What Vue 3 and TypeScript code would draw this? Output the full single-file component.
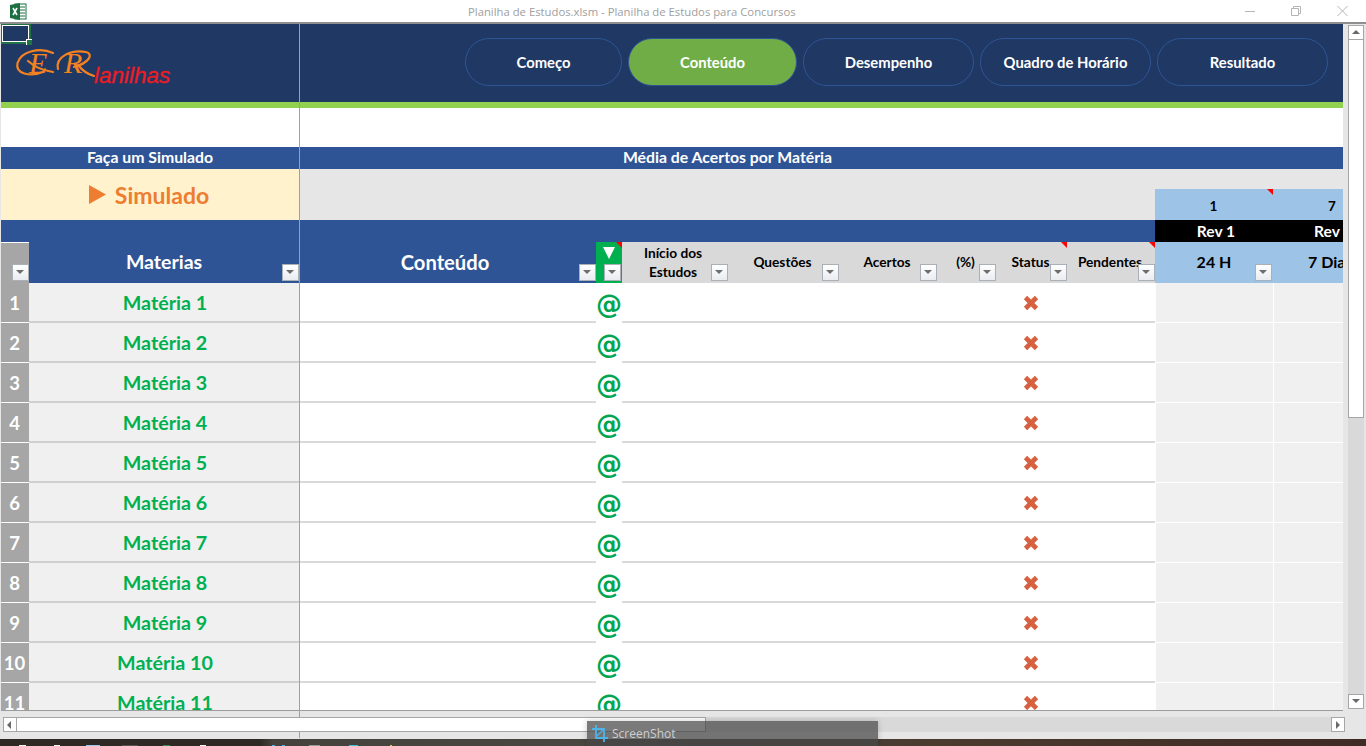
<script setup lang="ts">
const navItems = [
  { label: 'Começo', width: 157, active: false },
  { label: 'Conteúdo', width: 169, active: true },
  { label: 'Desempenho', width: 171, active: false },
  { label: 'Quadro de Horário', width: 171, active: false },
  { label: 'Resultado', width: 171, active: false },
]
const headers = [
  { label: 'Início dos Estudos', cls: 'wrap', note: false },
  { label: 'Questões', cls: '', note: false },
  { label: 'Acertos', cls: '', note: false },
  { label: '(%)', cls: '', note: false },
  { label: 'Status', cls: '', note: true },
  { label: 'Pendentes', cls: '', note: true },
]
const rows = Array.from({ length: 11 }, (_, i) => i + 1)
const trayBits = [
  { gap: 19, width: 7, color: '#f2f2f2' },
  { gap: 28, width: 6, color: '#f2f2f2' },
  { gap: 26, width: 14, color: '#9cc9ee' },
  { gap: 22, width: 16, color: '#55514e' },
  { gap: 25, width: 7, color: '#2f8f55' },
  { gap: 30, width: 6, color: '#f2f2f2' },
  { gap: 66, width: 3, color: '#4fb3e8' },
  { gap: 7, width: 3, color: '#4fb3e8' },
  { gap: 24, width: 11, color: '#9a9a9a' },
  { gap: 29, width: 9, color: '#3fc4d8' },
  { gap: 32, width: 2, color: '#e6c93a' },
]
</script>

<template>
  <div class="window">
    <header class="titlebar">
      <svg class="xl" width="17" height="17" viewBox="0 0 17 17">
        <rect x="5" y="1" width="11" height="15" fill="#fff" stroke="#1d6f42" />
        <path d="M10 4h5M10 7h5M10 10h5M10 13h5" stroke="#1d6f42" />
        <path d="M0 2l10-2v17L0 15z" fill="#1d6f42" />
        <path d="M3 5l4 7M7 5l-4 7" stroke="#fff" stroke-width="1.6" />
      </svg>
      <span class="doc-title">Planilha de Estudos.xlsm - Planilha de Estudos para Concursos</span>
      <svg class="controls" width="104" height="12" viewBox="0 0 104 12">
        <path d="M0 6.5h10" stroke="#b5b5b5" />
        <path d="M46.5 3.5h7v7h-7zM48.5 3.5v-2h7v7h-2" fill="none" stroke="#b5b5b5" />
        <path d="M92.5 1l10 10M102.5 1l-10 10" stroke="#b5b5b5" />
      </svg>
    </header>

    <div class="workspace">
      <main class="sheet">
        <div class="band navy-left">
          <svg class="logo" width="170" height="44" viewBox="0 0 170 44" role="img" aria-label="ER Planilhas">
            <g fill="none" stroke="#f58220" stroke-width="2.200" stroke-linecap="round">
              <path d="M43 9C30 3 11 7 7.500 19 5 30 20 33 33 28" />
              <path d="M18 17C24 22 30 26 43 28" />
              <path d="M48 25C45 13 61 5 76 8 84 10 79 19 64 23" />
              <path d="M68 21C72 26 77 30 84 32" />
            </g>
            <text class="logo-er" x="19" y="29">E</text>
            <text class="logo-er" x="54" y="29">R</text>
            <text class="logo-name" x="84" y="38.500">lanilhas</text>
          </svg>
        </div>
        <nav class="band navy-right">
          <a
            v-for="item in navItems"
            :key="item.label"
            class="pill"
            :class="{ active: item.active }"
            :style="{ width: item.width + 'px' }"
          >{{ item.label }}</a>
        </nav>
        <div class="lime"></div>
        <div class="blank"></div>

        <div class="title-left">Faça um Simulado</div>
        <div class="title-mid">Média de Acertos por Matéria</div>
        <div class="title-end"></div>

        <div class="simulado">
          <svg width="17" height="19" viewBox="0 0 17 19"><path d="M0 0l17 9.500L0 19z" fill="#ed7d31" /></svg>
          <span>Simulado</span>
        </div>
        <div class="gray-mid"></div>
        <div class="gray-end"></div>
        <div class="rev-days first"><span>1</span><i class="note"></i></div>
        <div class="rev-days second"><span>7</span></div>

        <div class="blue-left"></div>
        <div class="blue-mid"></div>
        <div class="rev-name first">Rev 1</div>
        <div class="rev-name second">Rev</div>

        <div class="corner"><button class="filter"></button></div>
        <div class="head-materia">Materias<button class="filter"></button></div>
        <div class="head-conteudo">Conteúdo<button class="filter"></button></div>
        <div class="head-link">
          <svg width="12" height="12" viewBox="0 0 12 12"><path d="M0 0h12L6 12z" fill="#fff" /></svg>
          <i class="note small"></i>
          <button class="filter"></button>
        </div>
        <div v-for="h in headers" :key="h.label" class="head-data" :class="h.cls">
          <span>{{ h.label }}</span>
          <i v-if="h.note" class="note"></i>
          <button class="filter"></button>
        </div>
        <div class="head-rev first">24 H<button class="filter"></button></div>
        <div class="head-rev second">7 Dias</div>

        <template v-for="n in rows" :key="n">
          <div class="row-no">{{ n }}</div>
          <div class="row-materia">Matéria {{ n }}</div>
          <div class="row-conteudo"></div>
          <div class="row-link">@</div>
          <div class="row-dates"></div>
          <div class="row-status">
            <svg width="16" height="16" viewBox="0 0 16 16">
              <path d="M2.500 2.500l11 11M13.500 2.500l-11 11" stroke="#d6603f" stroke-width="4.600" />
            </svg>
          </div>
          <div class="row-pending"></div>
          <div class="row-rev"></div>
          <div class="row-rev"></div>
        </template>

        <div class="freeze"></div>
        <div class="selection"></div>
        <i class="handle"></i>
      </main>

      <aside class="vscroll">
        <button class="sb-btn"><i class="up"></i></button>
        <div class="v-thumb"></div>
        <div class="v-track"></div>
        <button class="sb-btn"><i class="down"></i></button>
      </aside>
    </div>

    <div class="hscroll">
      <button class="sb-btn"><i class="left"></i></button>
      <div class="h-thumb"></div>
      <div class="h-track"></div>
      <button class="sb-btn"><i class="right"></i></button>
    </div>

    <footer class="taskbar">
      <i
        v-for="(bit, idx) in trayBits"
        :key="idx"
        class="bit"
        :style="{ marginLeft: bit.gap + 'px', width: bit.width + 'px', background: bit.color }"
      ></i>
    </footer>

    <div class="freeze-tick"></div>
    <div class="shot-tip">
      <svg width="16" height="17" viewBox="0 0 16 17" fill="none" stroke="#4fb3e8" stroke-width="1.800">
        <path d="M4 0v13h12M0 4h12v13" />
        <path d="M5 11l6-6" stroke-width="1.200" />
      </svg>
      <span>ScreenShot</span>
    </div>
  </div>
</template>

<style>
html,
body {
  margin: 0;
  overflow: hidden;
}
</style>

<style scoped>
.window {
  position: relative;
  width: 1366px;
  height: 746px;
  overflow: hidden;
  display: flex;
  flex-direction: column;
  background: #e6e6e6;
  font-family: Lato, "Open Sans", sans-serif;
}
.titlebar {
  height: 22px;
  flex: none;
  display: flex;
  align-items: center;
  padding: 0 17px 0 10px;
  background: #fff;
  border-bottom: 2px solid #8e8e8e;
}
.xl { flex: none; }
.doc-title {
  flex: 1;
  padding-left: 441px;
  font: 11.300px "Open Sans", sans-serif;
  color: #a0a0a0;
  white-space: nowrap;
}
.controls { flex: none; }

.workspace {
  flex: none;
  height: 687px;
  display: flex;
}
.sheet {
  position: relative;
  flex: none;
  width: 1342px;
  height: 686px;
  margin-left: 1px;
  overflow: hidden;
  background: #fff;
  border-bottom: 1px solid #9c9c9c;
  display: grid;
  grid-template-columns: 28px 270px 1px 296px 26px 106px 111px 98px 59px 71px 88px 118px 70px;
  grid-template-rows: 78px 6px 39px 22px 20px 31px 22px 41px repeat(11, 40px);
}
.band { background: #1f3864; }
.navy-left {
  grid-area: 1 / 1 / 2 / 3;
  padding: 20px 0 0 9px;
  overflow: hidden;
}
.logo { display: block; }
.logo-er {
  font: italic 400 30px "Liberation Serif", serif;
  fill: #f58220;
}
.logo-name {
  font: italic 400 22.500px "Liberation Sans", sans-serif;
  fill: #ed1c24;
  stroke: #ed1c24;
  stroke-width: 0.3px;
}
.navy-right {
  grid-area: 1 / 4 / 2 / 14;
  display: flex;
  align-items: flex-start;
  gap: 6px;
  padding: 14px 0 0 165px;
}
.pill {
  flex: none;
  box-sizing: border-box;
  height: 48px;
  border: 1px solid #2f5496;
  border-radius: 24px;
  display: flex;
  align-items: center;
  justify-content: center;
  color: #fff;
  font-size: 14.800px;
  font-weight: 700;
  white-space: nowrap;
  padding-bottom: 1px;
}
.pill.active { background: #70ad47; }
.lime { grid-area: 2 / 1 / 3 / 14; background: #92d050; }
.blank { grid-area: 3 / 1 / 4 / 14; background: #fff; }

.title-left,
.title-mid {
  display: flex;
  align-items: center;
  justify-content: center;
  background: #2f5496;
  color: #fff;
  font-size: 15.800px;
  font-weight: 700;
  padding-bottom: 3px;
  box-sizing: border-box;
}
.title-left { grid-area: 4 / 1 / 5 / 3; }
.title-mid { grid-area: 4 / 4 / 5 / 12; }
.title-end { grid-area: 4 / 12 / 5 / 14; background: #2f5496; }

.simulado {
  grid-area: 5 / 1 / 7 / 3;
  display: flex;
  align-items: center;
  justify-content: center;
  gap: 9px;
  padding-right: 2px;
  background: #fff2cc;
  color: #ed7d31;
  font-size: 23px;
  font-weight: 700;
}
.gray-mid { grid-area: 5 / 4 / 7 / 12; background: #e6e6e6; }
.gray-end { grid-area: 5 / 12 / 6 / 14; background: #e6e6e6; }
.rev-days {
  grid-row: 6;
  position: relative;
  display: flex;
  align-items: center;
  background: #9dc3e6;
  font-size: 13.500px;
  font-weight: 700;
  color: #000;
}
.rev-days span { position: relative; top: 1px; }
.rev-days.first { grid-column: 12; justify-content: center; padding-right: 1px; }
.rev-days.second { grid-column: 13; padding-left: 55px; }

.blue-left { grid-area: 7 / 1 / 8 / 3; background: #2f5496; }
.blue-mid { grid-area: 7 / 4 / 8 / 12; background: #2f5496; }
.rev-name {
  grid-row: 7;
  display: flex;
  align-items: center;
  background: #000;
  color: #fff;
  font-size: 15.600px;
  font-weight: 700;
  white-space: nowrap;
}
.rev-name.first { grid-column: 12; justify-content: center; padding-left: 4px; }
.rev-name.second { grid-column: 13; padding-left: 41px; overflow: hidden; }

.filter {
  position: absolute;
  right: 0;
  bottom: 2px;
  width: 17px;
  height: 17px;
  padding: 0;
  box-sizing: border-box;
  border: 1px solid #a9b0b8;
  background: linear-gradient(#ffffff, #e9ecf0);
}
.filter::after {
  content: "";
  position: absolute;
  left: 3px;
  top: 5px;
  border: 4px solid transparent;
  border-top: 4px solid #6d6d6d;
}
.corner {
  grid-area: 8 / 1;
  position: relative;
  background: #a6a6a6;
  border-top: 1px solid #fff;
  box-sizing: border-box;
}
.head-materia,
.head-conteudo {
  position: relative;
  display: flex;
  align-items: center;
  justify-content: center;
  background: #2f5496;
  color: #fff;
  font-weight: 700;
  padding-bottom: 2px;
  box-sizing: border-box;
}
.head-materia { grid-area: 8 / 2; font-size: 19.500px; }
.head-conteudo { grid-area: 8 / 4; font-size: 20.200px; padding-right: 6px; }
.head-link {
  grid-area: 8 / 5;
  position: relative;
  background: #00b050;
  display: flex;
  justify-content: center;
  align-items: flex-start;
  padding-top: 5px;
}
.head-link .filter { right: 1px; }
.head-data,
.head-rev {
  position: relative;
  grid-row: 8;
  display: flex;
  align-items: center;
  justify-content: center;
  text-align: center;
  color: #000;
  font-weight: 700;
}
.head-data {
  background: #d9d9d9;
  font-size: 13.700px;
  padding: 0 2px 2px 0;
}
.head-data.wrap {
  padding: 0 9px 2px 5px;
  line-height: 19px;
}
.head-rev {
  background: #9dc3e6;
  font-size: 16px;
  padding-bottom: 2px;
  white-space: nowrap;
  box-sizing: border-box;
}
.head-rev.first { grid-column: 12; }
.head-rev.first .filter { right: 1px; }
.head-rev.second {
  grid-column: 13;
  justify-content: flex-start;
  padding-left: 35px;
  overflow: hidden;
}
.note {
  position: absolute;
  top: 0;
  right: 0;
  width: 0;
  height: 0;
  border-top: 6px solid #ff0000;
  border-left: 6px solid transparent;
}

.row-no,
.row-materia,
.row-link,
.row-status {
  display: flex;
  align-items: center;
  justify-content: center;
  box-sizing: border-box;
}
.row-no {
  grid-column: 1;
  background: #a6a6a6;
  border-bottom: 1px solid #fff;
  color: #fff;
  font-size: 18.500px;
  font-weight: 700;
  padding: 1px 1px 0 0;
}
.row-materia {
  grid-column: 2;
  background: #f0f0f0;
  border-bottom: 2px solid #cfcfcf;
  color: #00b050;
  font-size: 19.700px;
  font-weight: 700;
  padding: 0 0 0 2px;
}
.row-conteudo,
.row-dates,
.row-status,
.row-pending {
  background: #fff;
  border-bottom: 2px solid #d9d9d9;
  box-sizing: border-box;
}
.row-conteudo { grid-column: 4; }
.row-link {
  grid-column: 5;
  background: #fff;
  color: #00a651;
  font: 700 26px "DejaVu Sans", sans-serif;
  padding-top: 2px;
}
.row-dates { grid-column: 6 / 10; }
.row-status { grid-column: 10; padding: 2px 1px 0 0; }
.row-pending { grid-column: 11; }
.row-rev {
  background: #f0f0f0;
  border-left: 1px solid #fff;
  border-bottom: 1px solid #fff;
  box-sizing: border-box;
}

.freeze {
  grid-area: 1 / 3 / -1 / 4;
  background: #a0a0a0;
}
.selection {
  position: absolute;
  left: 0;
  top: 0;
  width: 30px;
  height: 20px;
  box-sizing: border-box;
  border: solid #217346;
  border-width: 1px 2px 2px 1px;
  box-shadow: inset 0 0 0 1px #fff;
}
.handle {
  position: absolute;
  left: 25px;
  top: 15px;
  width: 6px;
  height: 6px;
  box-sizing: border-box;
  background: #217346;
  border: solid #fff;
  border-width: 1px 0 0 1px;
}

.vscroll {
  flex: none;
  margin: 1px 0 0 5px;
  width: 16px;
  height: 684px;
  display: flex;
  flex-direction: column;
  background: #d9d9d9;
}
.sb-btn {
  position: relative;
  flex: none;
  width: 16px;
  height: 15px;
  padding: 0;
  box-sizing: border-box;
  background: #fff;
  border: 1px solid #a6a6a6;
}
.sb-btn i {
  position: absolute;
  left: 3px;
  top: 3px;
  border: 4px solid transparent;
}
.sb-btn i.up { border-bottom-color: #6a6a6a; top: 0; }
.sb-btn i.down { border-top-color: #6a6a6a; top: 4px; }
.sb-btn i.left { border-right-color: #6a6a6a; left: -1px; }
.sb-btn i.right { border-left-color: #6a6a6a; left: 4px; }
.v-thumb {
  flex: none;
  height: 378px;
  box-sizing: border-box;
  background: #fff;
  border: 1px solid #a6a6a6;
  border-top: 0;
}
.v-track { flex: 1; }

.hscroll {
  position: relative;
  z-index: 1;
  flex: none;
  display: flex;
  height: 15px;
  margin: 6px 0 0 3px;
  width: 1342px;
  background: #d9d9d9;
}
.hscroll .sb-btn { width: 14px; height: 15px; }
.h-thumb {
  flex: none;
  width: 689px;
  box-sizing: border-box;
  background: #fff;
  border: 1px solid #a6a6a6;
  border-left: 0;
}
.h-track { flex: 1; }

.freeze-tick {
  position: absolute;
  left: 299px;
  top: 710px;
  width: 1px;
  height: 28px;
  background: #a0a0a0;
}

.taskbar {
  flex: none;
  height: 8px;
  margin-top: 7px;
  display: flex;
  align-items: flex-end;
  background: linear-gradient(90deg, #2e2925 0%, #2e2925 19%, #45423e 20%, #4a4640 45%, #4a3a2e 70%, #3f2a24 100%);
}
.bit {
  flex: none;
  height: 2px;
}

.shot-tip {
  position: absolute;
  z-index: 2;
  left: 587px;
  top: 721px;
  width: 291px;
  height: 25px;
  box-sizing: border-box;
  padding: 4px 0 0 5px;
  display: flex;
  gap: 4px;
  background: rgba(70, 70, 70, 0.72);
  box-shadow: 0 0 6px rgba(0, 0, 0, 0.2);
  color: #cfcfcf;
  font: 12px "Open Sans", sans-serif;
}
.shot-tip span { line-height: 17px; }
</style>
